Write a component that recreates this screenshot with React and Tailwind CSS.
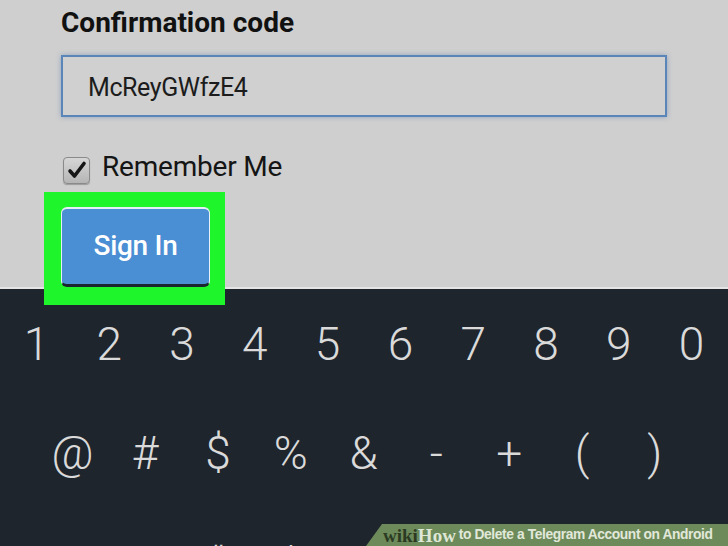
import React from "react";

const digits = ["1", "2", "3", "4", "5", "6", "7", "8", "9", "0"];
const symbols = ["@", "#", "$", "%", "&", "-", "+", "(", ")"];
const row3 = ["*", "\"", "'", ":", ";", "!", "?"];

export default function App() {
  return (
    <div className="w-[728px] h-[546px] overflow-hidden relative flex flex-col bg-[#1f252c] font-['Roboto',sans-serif]">
      {/* Top form area */}
      <div className="relative z-10 h-[287px] shrink-0 bg-[#cfcfcf] pl-[61px] pt-[7px] flex flex-col">
        <div className="text-[28px] leading-[32px] font-bold text-[#111] tracking-[0px]">
          Confirmation code
        </div>
        <div className="mt-[16px] w-[606px] h-[62px] border-2 border-[#5a85b8] shadow-[0_0_5px_rgba(70,110,170,0.45)] bg-[#d0d0d0] flex items-center pl-[25px]">
          <span className="text-[25px] text-[#1c1c1c] tracking-[-0.4px] mt-[3px]">McReyGWfzE4</span>
        </div>
        <div className="mt-[40px] flex items-center gap-[12px] ml-[2px]">
          <div className="w-[27px] h-[27px] rounded-[4px] border border-[#8a8a8a] bg-gradient-to-b from-[#d6d6d6] to-[#b5b5b5] flex items-center justify-center shadow-[0_1px_1px_rgba(0,0,0,0.25)]">
            <svg width="20" height="20" viewBox="0 0 20 20">
              <path d="M3 11 L7.5 16 L17 3.5" fill="none" stroke="#161616" strokeWidth="3.6" strokeLinecap="round" strokeLinejoin="round" />
            </svg>
          </div>
          <span className="text-[28px] leading-[32px] text-[#151515] tracking-[-0.2px] -mt-[7px]">Remember Me</span>
        </div>
        <div className="relative mt-[23px] w-[149px] h-[81px]">
          <div className="absolute -left-[17px] -top-[15px] -right-[15px] -bottom-[18px] bg-[#1ff52b]" />
          <div className="relative w-full h-full rounded-[6px] bg-[#4a8ed3] border-t-2 border-l border-r border-[#e6eef8] border-b-[3px] border-b-[#1b2530] flex items-center justify-center">
            <span className="text-[28px] text-white font-medium tracking-[-0.3px]">Sign In</span>
          </div>
        </div>
      </div>
      <div className="h-[2px] shrink-0 bg-[#e4e4e4]" />
      {/* Keyboard */}
      <div className="flex-1 pt-[32px] flex flex-col font-light text-[#dadada]">
        <div className="grid grid-cols-10 text-[46px] leading-[46px]">
          {digits.map((d) => (
            <div key={d} className="text-center">{d}</div>
          ))}
        </div>
        <div className="mt-[63px] pl-[36px] pr-[36px] grid grid-cols-[repeat(9,72.8px)] text-[46px] leading-[46px]">
          {symbols.map((s) => (
            <div key={s} className="text-center">{s}</div>
          ))}
        </div>
        <div className="mt-[65px] pl-[109px] grid grid-cols-[repeat(7,72.8px)] text-[46px] leading-[46px]">
          {row3.map((s) => (
            <div key={s} className="text-center">{s}</div>
          ))}
        </div>
      </div>
      {/* wikiHow banner */}
      <div className="absolute left-[366px] right-0 bottom-0 h-[22px] bg-[#6d8a5a] [clip-path:polygon(16px_0,100%_0,100%_100%,0_100%)] flex items-center pl-[17px]">
        <span className="font-['Liberation_Serif',serif] font-bold text-[19px] leading-none text-[#2b3a22]">wiki</span>
        <span className="font-['Liberation_Serif',serif] font-bold text-[19px] leading-none text-[#dfe7d6]">How</span>
        <span className="ml-[3px] font-['Liberation_Sans',sans-serif] font-bold text-[13.8px] leading-none text-[#e1e8da] tracking-[-0.4px] whitespace-nowrap">
          to Delete a Telegram Account on Android
        </span>
      </div>
    </div>
  );
}
